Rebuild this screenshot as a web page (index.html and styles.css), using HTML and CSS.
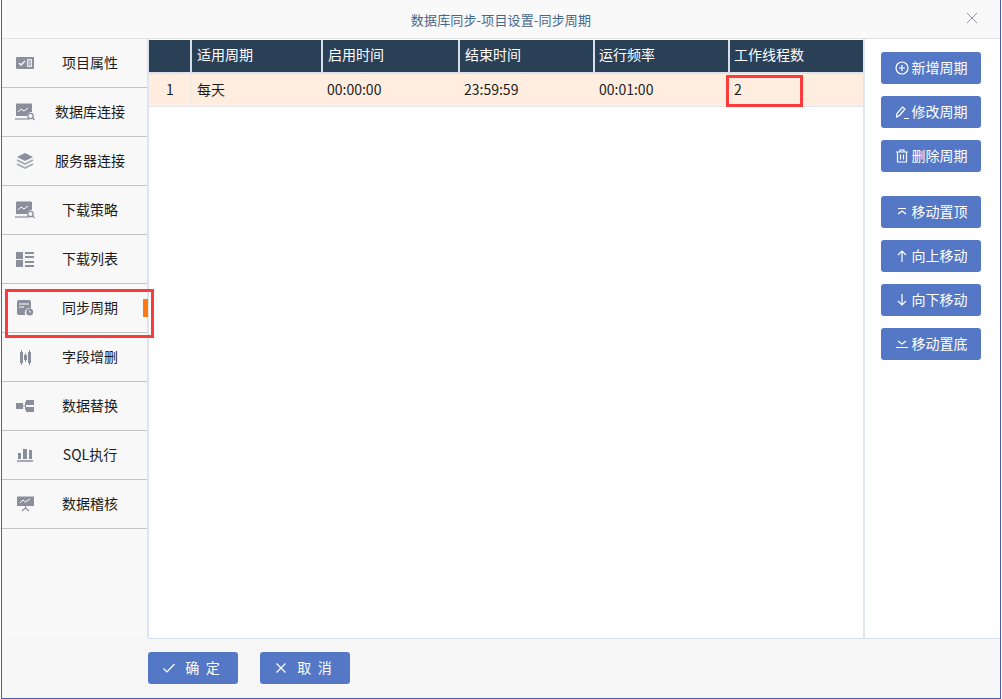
FILE: index.html
```html
<!DOCTYPE html>
<html lang="zh">
<head>
<meta charset="utf-8">
<title>同步周期</title>
<link rel="stylesheet" href="styles.css">
</head>
<body>
<div class="window">
  <header class="titlebar">
    <span class="title">数据库同步-项目设置-同步周期</span>
    <svg class="close" width="12" height="12" viewBox="0 0 12 12"><path d="M1 1l10 10M11 1L1 11" stroke="#8f9aa6" stroke-width="1" fill="none"/></svg>
  </header>
  <div class="middle">
    <nav class="sidebar">
      <div class="item"><span class="icon"><svg width="18" height="12" viewBox="0 0 18 12"><rect width="18" height="12" rx="1" fill="#8b8e9b"/><path d="M3 6l2 2 4-4" stroke="#fff" stroke-width="1.3" fill="none"/><rect x="11" y="2" width="5" height="8" fill="#e8e8ea"/><path d="M12 4h3M12 6h3M12 8h3" stroke="#8b8e9b"/></svg></span><span class="label">项目属性</span></div>
      <div class="item"><span class="icon"><svg width="20" height="18" viewBox="0 0 20 18"><path d="M1 1.500a1 1 0 0 1 1-1h14a1 1 0 0 1 1 1V9a5 5 0 0 0-5 4H1z" fill="#8b8e9b"/><path d="M3 9l3-3 3 2 4-3" stroke="#fff" stroke-width="1" fill="none"/><path d="M0 16h14" stroke="#8b8e9b" stroke-width="1.200"/><circle cx="15.500" cy="13" r="2.700" fill="none" stroke="#8b8e9b" stroke-width="1.300"/><path d="M17.500 15l2 2" stroke="#8b8e9b" stroke-width="1.200"/></svg></span><span class="label">数据库连接</span></div>
      <div class="item"><span class="icon"><svg width="18" height="16" viewBox="0 0 18 16"><path d="M9 0l8 4-8 4-8-4z" fill="#8b8e9b"/><path d="M1 7l8 4 8-4M1 11l8 4 8-4" stroke="#a5a7b1" stroke-width="1.700" fill="none"/></svg></span><span class="label">服务器连接</span></div>
      <div class="item"><span class="icon"><svg width="20" height="18" viewBox="0 0 20 18"><path d="M1 1.500a1 1 0 0 1 1-1h14a1 1 0 0 1 1 1V9a5 5 0 0 0-5 4H1z" fill="#8b8e9b"/><path d="M3 9l3-3 3 2 4-3" stroke="#fff" stroke-width="1" fill="none"/><path d="M0 16h14" stroke="#8b8e9b" stroke-width="1.200"/><circle cx="15.500" cy="13" r="2.700" fill="none" stroke="#8b8e9b" stroke-width="1.300"/><path d="M17.500 15l2 2" stroke="#8b8e9b" stroke-width="1.200"/></svg></span><span class="label">下载策略</span></div>
      <div class="item"><span class="icon"><svg width="18" height="15" viewBox="0 0 18 15"><path d="M0 0h7v7H0zM0 8h7v7H0z" fill="#8b8e9b"/><path d="M9 0h9v2H9zM9 4h9v2H9zM9 9h9v2H9zM9 13h9v2H9z" fill="#8b8e9b"/></svg></span><span class="label">下载列表</span></div>
      <div class="item active"><span class="icon"><svg width="17" height="16" viewBox="0 0 17 16"><path d="M2 0h10a2 2 0 0 1 2 2v6.500A4.500 4.500 0 0 0 8.500 15H2a2 2 0 0 1-2-2V2a2 2 0 0 1 2-2z" fill="#8b8e9b"/><path d="M2 4h10M2 7h5" stroke="#fff" stroke-width="1"/><circle cx="12.700" cy="12" r="3.500" fill="#8b8e9b"/><path d="M12.700 10.500V12h1.500" stroke="#fff" stroke-width=".8" fill="none"/></svg></span><span class="label">同步周期</span><i class="marker"></i><i class="redbox side"></i></div>
      <div class="item"><span class="icon"><svg width="11" height="15" viewBox="0 0 11 15"><path d="M1.500 0v15M5.500 3v9M9.500 0v15" stroke="#8b8e9b" stroke-width="1"/><path d="M0 2h3v11H0zM4 5h3v5H4zM8 2h3v11H8z" fill="#8b8e9b"/></svg></span><span class="label">字段增删</span></div>
      <div class="item"><span class="icon"><svg width="18" height="12" viewBox="0 0 18 12"><path d="M0 3h7v6H0z" fill="#8b8e9b"/><path d="M7 6h3M9.500 2v8" stroke="#8b8e9b"/><path d="M10 0h8v5h-8zM10 7h8v5h-8z" fill="#8b8e9b"/></svg></span><span class="label">数据替换</span></div>
      <div class="item"><span class="icon"><svg width="16" height="14" viewBox="0 0 16 14"><path d="M1 5h3v6H1zM6 1h4v10H6zM12 2h3v9h-3z" fill="#8b8e9b"/><path d="M0 13h16" stroke="#8b8e9b" stroke-width="1.500"/></svg></span><span class="label">SQL执行</span></div>
      <div class="item"><span class="icon"><svg width="17" height="16" viewBox="0 0 17 16"><path d="M0 .5h17V10H0z" fill="#8b8e9b"/><path d="M3 7l3-3 2.500 2L13 3" stroke="#fff" fill="none"/><path d="M8.500 10v3M5 15l3.500-3 3.500 3" stroke="#8b8e9b" stroke-width="1.200" fill="none"/></svg></span><span class="label">数据稽核</span></div>
    </nav>
    <main class="grid-pane">
      <div class="row head">
        <div class="cell"></div>
        <div class="cell">适用周期</div>
        <div class="cell">启用时间</div>
        <div class="cell">结束时间</div>
        <div class="cell">运行频率</div>
        <div class="cell">工作线程数</div>
      </div>
      <div class="row body">
        <div class="cell num">1</div>
        <div class="cell">每天</div>
        <div class="cell">00:00:00</div>
        <div class="cell">23:59:59</div>
        <div class="cell">00:01:00</div>
        <div class="cell threads">2<i class="redbox cellbox"></i></div>
      </div>
    </main>
    <aside class="actions">
      <div class="group">
        <button class="btn"><svg width="14" height="14" viewBox="0 0 14 14"><circle cx="7" cy="7" r="6" stroke="#fff" stroke-width="1.200" fill="none"/><path d="M4 7h6M7 4v6" stroke="#fff" stroke-width="1.200" fill="none"/></svg><span class="txt">新增周期</span></button>
        <button class="btn"><svg width="14" height="14" viewBox="0 0 14 14"><path d="M1.500 12l.5-3.500L7.500 2l2.500 2-5.500 6.500zM9 13.500h5" stroke="#fff" stroke-width="1.200" fill="none"/></svg><span class="txt">修改周期</span></button>
        <button class="btn"><svg width="14" height="14" viewBox="0 0 14 14"><path d="M1 3h12M5 3V1h4v2M2.500 3v10h9V3M5.500 5.500v5M8.500 5.500v5" stroke="#fff" stroke-width="1.200" fill="none"/></svg><span class="txt">删除周期</span></button>
      </div>
      <div class="group">
        <button class="btn"><svg width="14" height="14" viewBox="0 0 14 14"><path d="M3 3.500h8M3 9l4-3 4 3" stroke="#fff" stroke-width="1.200" fill="none"/></svg><span class="txt">移动置顶</span></button>
        <button class="btn"><svg width="14" height="14" viewBox="0 0 14 14"><path d="M7 13V2M3 6l4-4 4 4" stroke="#fff" stroke-width="1.200" fill="none"/></svg><span class="txt">向上移动</span></button>
        <button class="btn"><svg width="14" height="14" viewBox="0 0 14 14"><path d="M7 1v11M3 8l4 4 4-4" stroke="#fff" stroke-width="1.200" fill="none"/></svg><span class="txt">向下移动</span></button>
        <button class="btn"><svg width="14" height="14" viewBox="0 0 14 14"><path d="M3 4l4 3 4-3M1 10.500h12" stroke="#fff" stroke-width="1.200" fill="none"/></svg><span class="txt">移动置底</span></button>
      </div>
    </aside>
  </div>
  <footer class="footer">
    <button class="btn wide"><svg width="14" height="14" viewBox="0 0 14 14"><path d="M1.500 7.500l3.500 3.500 7.500-8" stroke="#fff" stroke-width="1.200" fill="none"/></svg><span class="txt">确 定</span></button>
    <button class="btn wide"><svg width="14" height="14" viewBox="0 0 14 14"><path d="M2.500 2.500l9 9M11.500 2.500l-9 9" stroke="#fff" stroke-width="1.200" fill="none"/></svg><span class="txt">取 消</span></button>
  </footer>
</div>
</body>
</html>
```

FILE: styles.css
```css
html, body {
  margin: 0;
  height: 100%;
  background: #fff;
  overflow: hidden;
}
body {
  padding: 0 1px;
  box-sizing: border-box;
  font-family: "Noto Sans CJK SC", "Liberation Sans", sans-serif;
  font-size: 14px;
  color: #1c1c1c;
}
.window {
  width: 1000px;
  height: 699px;
  box-sizing: border-box;
  border: 1px solid #4a5cab;
  border-top: 0;
  background: #f7f7f7;
  display: flex;
  flex-direction: column;
}
.titlebar {
  height: 38px;
  flex: none;
  background: #f9f9f9;
  border-bottom: 1px solid #e2e2e2;
  display: flex;
  align-items: center;
  justify-content: center;
  position: relative;
}
.title {
  font-size: 13px;
  letter-spacing: .15px;
  color: #46678d;
}
.close {
  position: absolute;
  right: 22px;
  top: 12px;
}
.middle {
  flex: 1;
  display: flex;
  min-height: 0;
}
.sidebar {
  width: 145px;
  flex: none;
  background: #f8f8f8;
  border-right: 2px solid #dfe4f0;
}
.item {
  height: 48px;
  border-bottom: 1px solid #c3c3c3;
  display: flex;
  align-items: center;
  position: relative;
}
.icon {
  width: 46px;
  flex: none;
  display: flex;
  justify-content: center;
}
.label {
  width: 84px;
  text-align: center;
  white-space: nowrap;
  margin-top: -2px;
}
.marker {
  position: absolute;
  left: 141px;
  top: 15px;
  width: 5px;
  height: 18px;
  background: #ff7a0e;
}
.redbox {
  position: absolute;
  border: 3px solid #fb3a3a;
  box-sizing: border-box;
}
.side {
  left: 3px;
  top: 5px;
  width: 149px;
  height: 49px;
  z-index: 2;
}
.grid-pane {
  flex: none;
  width: 714px;
  background: #fff;
  border-right: 2px solid #dfe4f0;
  padding-top: 1px;
}
.row {
  display: grid;
  grid-template-columns: 41px 131px 137px 135px 135px 135px;
}
.cell {
  box-sizing: border-box;
  padding-left: 4px;
  border-left: 2px solid transparent;
  display: flex;
  align-items: center;
  position: relative;
}
.cell:nth-child(2) {
  padding-left: 5px;
}
.cell:first-child {
  border-left: 0;
}
.head {
  border-bottom: 2px solid #dde2ec;
}
.head .cell {
  height: 32px;
  padding-bottom: 5px;
  background: #2a4056;
  color: #fff;
  border-left-color: #d9dfea;
}
.head .cell:nth-child(3),
.head .cell:nth-child(4) {
  padding-left: 5px;
}
.body {
  height: 33px;
  box-sizing: border-box;
  background: #ffeee0;
  border-bottom: 1px solid #e4e7ee;
}
.body .cell {
  padding-bottom: 2px;
}
.body .cell:nth-child(2) {
  border-left-color: #f3ebe4;
}
.body .num {
  justify-content: center;
  padding-left: 1px;
}
.cellbox {
  left: -4px;
  top: 1px;
  width: 77px;
  height: 32px;
}
.actions {
  flex: 1;
  background: #fff;
  padding: 13px 0 0 16px;
  display: flex;
  flex-direction: column;
  gap: 24px;
}
.group {
  display: flex;
  flex-direction: column;
  gap: 12px;
}
.btn {
  width: 100px;
  height: 32px;
  border: 0;
  border-radius: 3px;
  background: #5478c6;
  color: #fff;
  font: inherit;
  padding: 0;
  display: flex;
  align-items: center;
  justify-content: center;
  gap: 3px;
}
.txt {
  margin-top: -2px;
}
.footer {
  height: 60px;
  flex: none;
  box-sizing: border-box;
  background: #f7f7f7;
  border-top: 1px solid #d8dff0;
  margin-left: 146px;
  padding-top: 13px;
  display: flex;
  gap: 22px;
}
.wide {
  width: 90px;
  gap: 9px;
  padding-right: 4px;
}
.wide .txt {
  word-spacing: 3.5px;
}
```
